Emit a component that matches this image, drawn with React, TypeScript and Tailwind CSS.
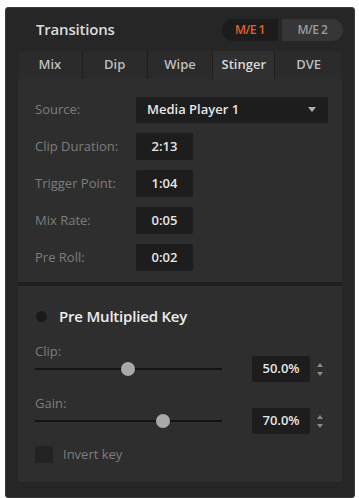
import React from "react";

const font = { fontFamily: '"Open Sans", "Noto Sans", sans-serif' };

function TimeRow({ label, value }: { label: string; value: string }) {
  return (
    <div className="flex items-center h-[27px]">
      <div className="w-[118px] pl-[17px] text-[13px] text-[#7d7d7d]">{label}</div>
      <div className="w-[57px] h-[27px] bg-[#1d1d1d] rounded-[2px] flex items-center justify-center text-[13px] text-[#e6e6e6] font-semibold">
        {value}
      </div>
    </div>
  );
}

function Slider({ label, pct, value }: { label: string; pct: number; value: string }) {
  return (
    <div className="flex flex-col">
      <div className="pl-[17px] text-[13px] text-[#7d7d7d] h-[18px] leading-[18px]">{label}</div>
      <div className="flex items-center h-[26px] mt-[-4px]">
        <div className="ml-[17px] w-[187px] relative h-[14px] flex items-center">
          <div className="w-full h-[2px] bg-[#141414]" />
          <div
            className="absolute top-0 w-[14px] h-[14px] rounded-full bg-[#a9a9a9]"
            style={{ left: `${pct}px` }}
          />
        </div>
        <div className="ml-[30px] w-[58px] h-[26px] bg-[#1d1d1d] rounded-[2px] flex items-center justify-center text-[13px] text-[#e6e6e6] font-semibold">
          {value}
        </div>
        <div className="ml-[6px] flex flex-col items-center gap-[3px]">
          <svg width="8" height="6" viewBox="0 0 8 6"><path d="M4 1 L7 5 L1 5 Z" fill="#8a8a8a" /></svg>
          <svg width="8" height="6" viewBox="0 0 8 6"><path d="M4 5 L7 1 L1 1 Z" fill="#8a8a8a" /></svg>
        </div>
      </div>
    </div>
  );
}

export default function App() {
  return (
    <div className="w-[359px] h-[498px] bg-white pt-[7px] pl-[5px] pr-[4px]" style={font}>
      <div className="h-[491px] bg-[#262626] rounded-[3px] border border-[#3b3b3b] px-[12px]">
        {/* header */}
        <div className="h-[43px] flex items-center justify-between">
          <div className="pl-[18px] text-[15px] font-semibold text-[#dcdcdc] tracking-[-0.2px]">Transitions</div>
          <div className="flex items-center mr-[-1px]">
            <div className="w-[56px] h-[22px] bg-[#1c1c1c] rounded-l-full flex items-center justify-center text-[12px] font-semibold text-[#e2622a] tracking-[-0.5px]">
              M/E 1
            </div>
            <div className="ml-[4px] w-[61px] h-[22px] bg-[#363636] rounded-r-full flex items-center justify-center text-[12px] font-semibold text-[#9c9c9c] tracking-[-0.5px]">
              M/E 2
            </div>
          </div>
        </div>
        {/* tabs */}
        <div className="flex h-[28px] text-[13px] font-semibold">
          {[
            ["Mix", 65, false],
            ["Dip", 65, false],
            ["Wipe", 66, false],
            ["Stinger", 62, true],
            ["DVE", 67, false],
          ].map(([t, w, a]) => (
            <div
              key={t as string}
              className={
                "flex items-center justify-center border-r border-[#1e1e1e] last:border-r-0 " +
                (a ? "bg-[#303030] text-[#d8d8d8]" : "bg-[#2b2b2b] text-[#bdbdbd]")
              }
              style={{ width: `${w}px` }}
            >
              {t as string}
            </div>
          ))}
        </div>
        {/* content */}
        <div className="bg-[#2e2e2e] pt-[17px] pb-[11px] flex flex-col gap-[10px] border-b-[4px] border-[#1f1f1f]">
          <div className="flex items-center h-[27px]">
            <div className="w-[118px] pl-[17px] text-[13px] text-[#7d7d7d]">Source:</div>
            <div className="w-[192px] h-[26px] bg-[#1d1d1d] rounded-[2px] flex items-center justify-between pl-[11px] pr-[12px] text-[13px] text-[#e6e6e6] font-semibold">
              <span>Media Player 1</span>
              <svg width="8" height="5" viewBox="0 0 8 5"><path d="M0 0 L8 0 L4 5 Z" fill="#b0b0b0" /></svg>
            </div>
          </div>
          <TimeRow label="Clip Duration:" value="2:13" />
          <TimeRow label="Trigger Point:" value="1:04" />
          <TimeRow label="Mix Rate:" value="0:05" />
          <TimeRow label="Pre Roll:" value="0:02" />
        </div>
        {/* lower section */}
        <div className="bg-[#2e2e2e] h-[196px] pt-[20px]">
          <div className="flex items-center h-[20px]">
            <div className="ml-[18px] w-[11px] h-[11px] rounded-full bg-[#1a1a1a]" />
            <div className="ml-[12px] text-[15px] font-semibold text-[#ececec] tracking-[-0.2px]">Pre Multiplied Key</div>
          </div>
          <div className="mt-[16px] flex flex-col gap-[12px]">
            <Slider label="Clip:" pct={86} value="50.0%" />
            <Slider label="Gain:" pct={121} value="70.0%" />
          </div>
          <div className="mt-[12px] flex items-center h-[17px]">
            <div className="ml-[17px] w-[18px] h-[17px] bg-[#222222] rounded-[1px]" />
            <div className="ml-[10px] text-[13px] text-[#7d7d7d]">Invert key</div>
          </div>
        </div>
      </div>
    </div>
  );
}
